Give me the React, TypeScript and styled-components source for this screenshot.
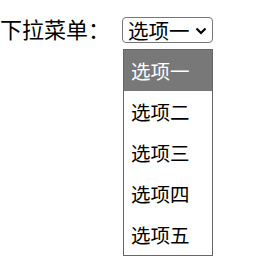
import React from "react";
import styled, { createGlobalStyle } from "styled-components";

const GlobalStyle = createGlobalStyle`
  html, body {
    margin: 0;
    padding: 0;
    background: #ffffff;
  }
  body {
    font-family: "Noto Sans CJK SC", "Liberation Sans", sans-serif;
    color: #000000;
  }
`;

const Page = styled.div`
  display: flex;
  align-items: flex-start;
  padding-top: 17px;
  min-height: 259px;
  box-sizing: border-box;
`;

const Label = styled.label`
  font-size: 22px;
  line-height: 24px;
  margin-top: -1px;
  width: 122px;
  white-space: nowrap;
`;

const SelectWrap = styled.div`
  display: flex;
  flex-direction: column;
  align-items: flex-start;
`;

const SelectBox = styled.div`
  box-sizing: border-box;
  width: 91px;
  height: 26px;
  border: 1px solid #767676;
  border-radius: 4px;
  display: flex;
  align-items: center;
  justify-content: space-between;
  padding: 0 5px 0 5px;
  font-size: 20.5px;
  line-height: 24px;
`;

const Chevron = styled.svg`
  width: 12px;
  height: 8px;
  margin-top: 1px;
`;

const Menu = styled.ul`
  box-sizing: border-box;
  width: 90px;
  margin: 6px 0 0 1px;
  padding: 0;
  list-style: none;
  border: 1px solid #666666;
  background: #ffffff;
`;

const Item = styled.li<{ $active?: boolean }>`
  height: 41px;
  display: flex;
  align-items: center;
  padding-left: 7px;
  font-size: 19.5px;
  background: ${(p) => (p.$active ? "#787878" : "#ffffff")};
  color: ${(p) => (p.$active ? "#ffffff" : "#000000")};
`;

const options = ["选项一", "选项二", "选项三", "选项四", "选项五"];

const App: React.FC = () => {
  return (
    <>
      <GlobalStyle />
      <Page>
        <Label>下拉菜单：</Label>
        <SelectWrap>
          <SelectBox>
            <span>选项一</span>
            <Chevron viewBox="0 0 12 8">
              <path d="M1.5 1.5 L6 6 L10.5 1.5" fill="none" stroke="#000" strokeWidth="2.2" />
            </Chevron>
          </SelectBox>
          <Menu>
            {options.map((o, i) => (
              <Item key={o} $active={i === 0}>
                {o}
              </Item>
            ))}
          </Menu>
        </SelectWrap>
      </Page>
    </>
  );
};

export default App;
